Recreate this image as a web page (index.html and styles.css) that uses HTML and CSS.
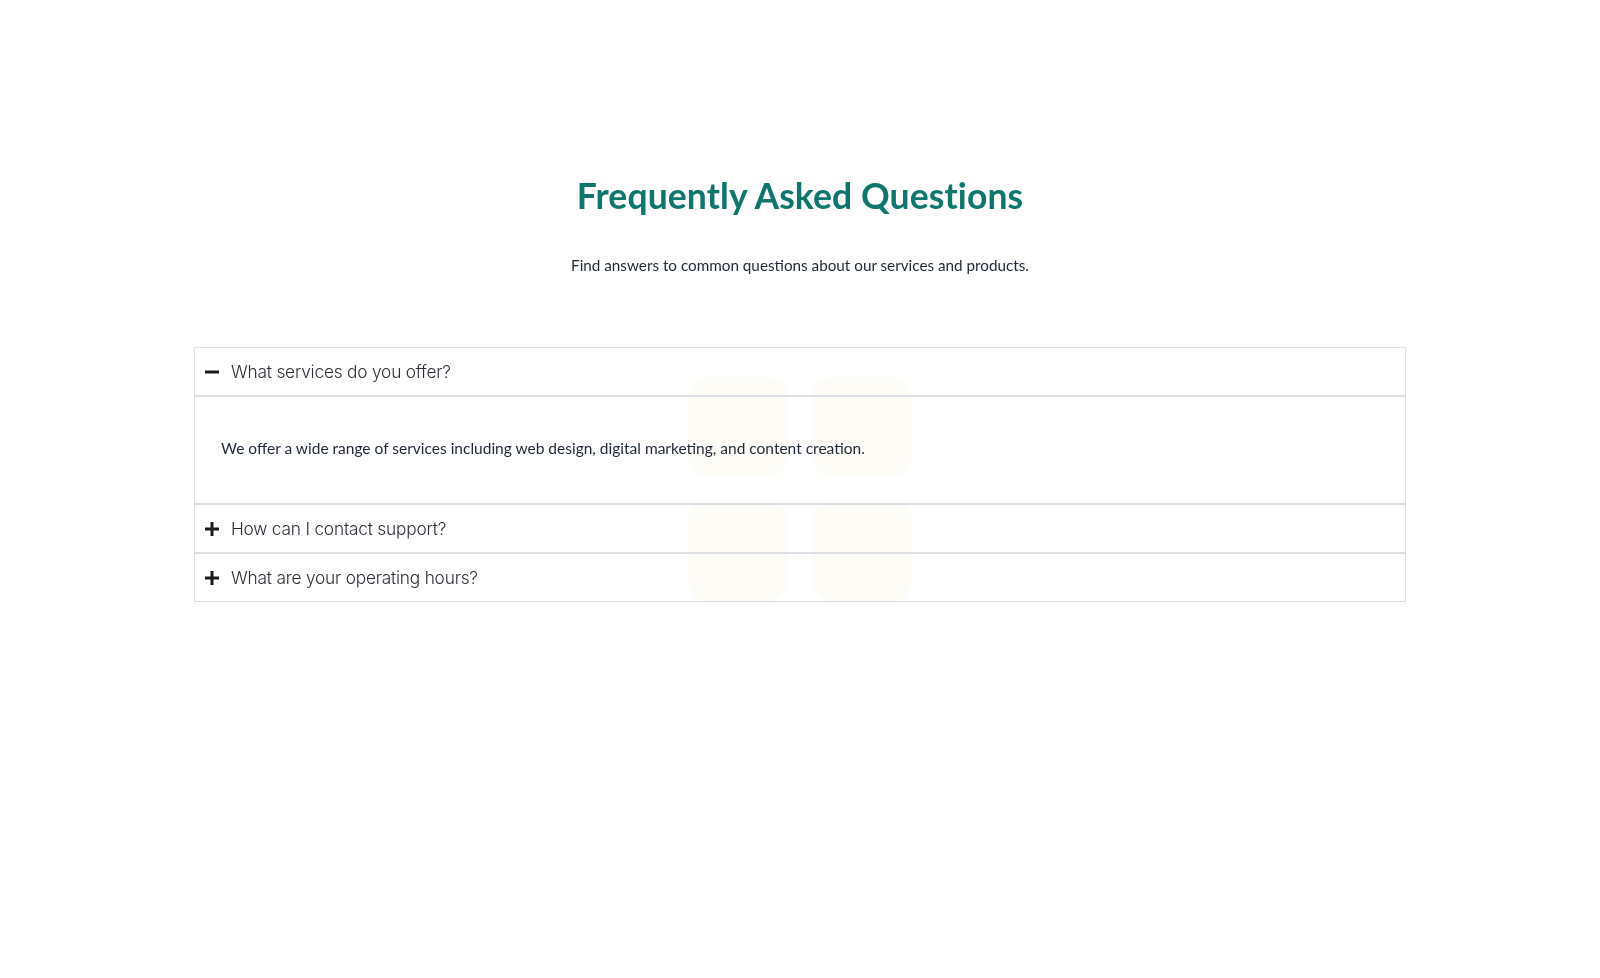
FILE: index.html
```html
<!DOCTYPE html>
<html lang="en">
<head>
<meta charset="utf-8">
<title>FAQ</title>
<link rel="stylesheet" href="styles.css">
</head>
<body>
<div class="decor" aria-hidden="true">
  <span class="tile"></span><span class="tile"></span>
  <span class="tile"></span><span class="tile"></span>
</div>
<main class="page">
  <h1 class="title">Frequently Asked Questions</h1>
  <p class="subtitle">Find answers to common questions about our services and products.</p>
  <section class="accordion">
    <div class="item open">
      <div class="header">
        <svg class="icon" viewBox="0 0 14 14" width="14" height="14"><rect x="0" y="5.5" width="14" height="3" fill="currentColor"/></svg>
        <span class="question">What services do you offer?</span>
      </div>
      <div class="answer">We offer a wide range of services including web design, digital marketing, and content creation.</div>
    </div>
    <div class="item">
      <div class="header">
        <svg class="icon" viewBox="0 0 14 14" width="14" height="14"><rect x="0" y="5.5" width="14" height="3" fill="currentColor"/><rect x="5.5" y="0" width="3" height="14" fill="currentColor"/></svg>
        <span class="question">How can I contact support?</span>
      </div>
    </div>
    <div class="item">
      <div class="header">
        <svg class="icon" viewBox="0 0 14 14" width="14" height="14"><rect x="0" y="5.5" width="14" height="3" fill="currentColor"/><rect x="5.5" y="0" width="3" height="14" fill="currentColor"/></svg>
        <span class="question">What are your operating hours?</span>
      </div>
    </div>
  </section>
</main>
</body>
</html>
```
FILE: styles.css
```css
html, body {
  margin: 0;
  padding: 0;
  background: #ffffff;
}

body {
  font-family: "Lato", "Noto Sans", sans-serif;
  color: #1f2937;
}

.decor {
  position: fixed;
  top: 50%;
  left: 50%;
  transform: translate(-50%, -50%);
  display: grid;
  grid-template-columns: 100px 100px;
  grid-template-rows: 100px 100px;
  gap: 24px;
  z-index: 0;
  pointer-events: none;
}

.tile {
  display: block;
  background: #fdfcf7;
  border-radius: 20px;
}

.page {
  position: relative;
  z-index: 1;
  display: flex;
  flex-direction: column;
  align-items: center;
  padding-top: 174px;
}

.title {
  margin: 0;
  font-family: "Lato", "Noto Sans", sans-serif;
  font-weight: 700;
  font-size: 35.5px;
  line-height: 44px;
  color: #0f766e;
  letter-spacing: 0.1px;
}

.subtitle {
  margin: 35px 0 0;
  font-size: 15.25px;
  line-height: 24px;
  color: #1f2937;
}

.accordion {
  margin-top: 70px;
  width: 1212px;
  display: flex;
  flex-direction: column;
}

.item {
  border: 1px solid #dcdfe3;
  background: transparent;
}

.header {
  height: 47px;
  display: flex;
  align-items: center;
  gap: 12px;
  padding-left: 10px;
  color: #1a1a1a;
}

.item.open .header {
  border-bottom: 1px solid #dcdfe3;
}

.icon {
  flex: none;
  color: #1a1a1a;
}

.question {
  font-family: "Inter", "Noto Sans", sans-serif;
  font-weight: 300;
  font-size: 17.3px;
  color: #2b2f36;
  letter-spacing: -0.2px;
}

.answer {
  border-top: 1px solid #dcdfe3;
  height: 107px;
  box-sizing: border-box;
  display: flex;
  align-items: center;
  padding-left: 26px;
  padding-bottom: 4px;
  font-size: 15.5px;
  color: #1f2937;
}
```
